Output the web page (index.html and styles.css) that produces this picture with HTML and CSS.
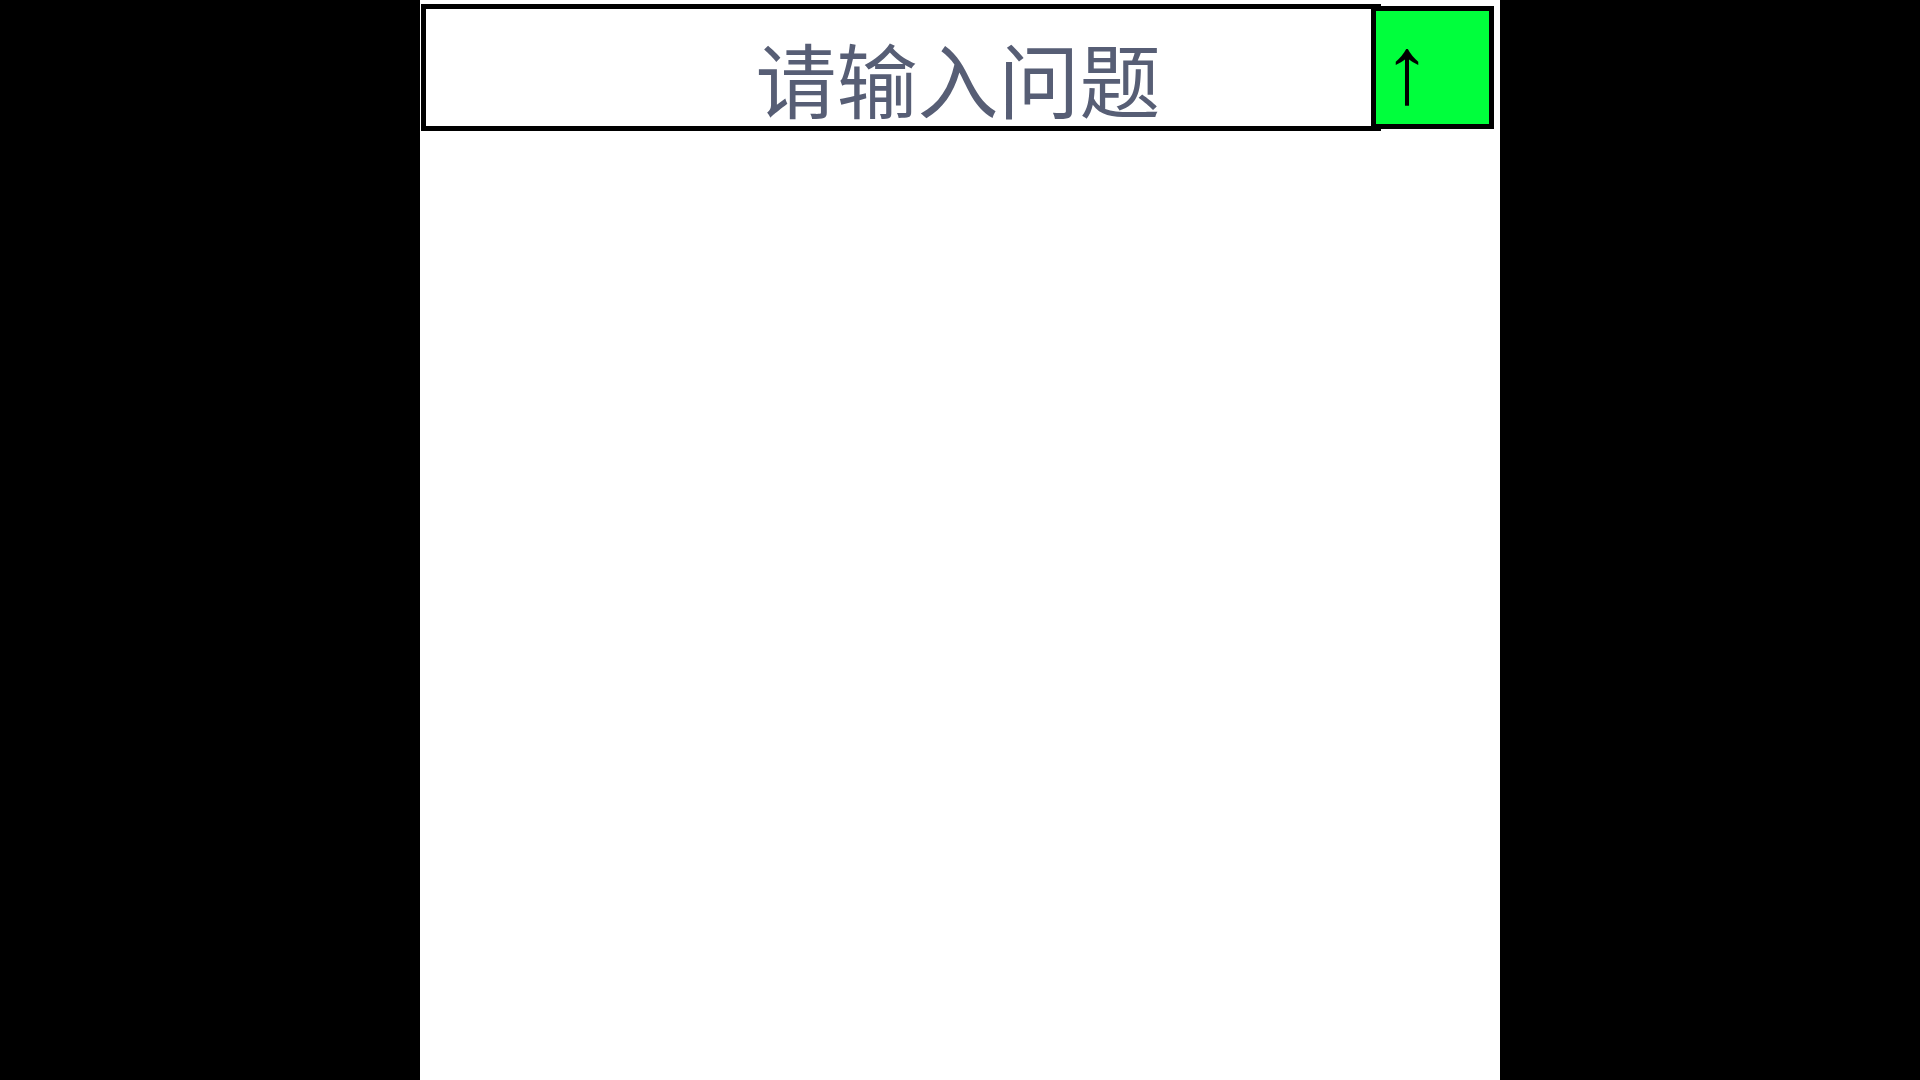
FILE: index.html
```
<!DOCTYPE html>
<html lang="zh-CN">
<head>
    <meta charset="UTF-8">
    <meta name="viewport" content="width=device-width, initial-scale=1.0">
    <title>请输入问题</title>

    <link rel="stylesheet" href="styles.css">

</head>
<body>

    <main class="stage">
        <form class="ask">
            <input type="text" class="ask-input" placeholder="请输入问题" aria-label="请输入问题">
            <button type="button" class="ask-send">↑</button>
        </form>
    </main>

</body>
</html>
```
FILE: styles.css
```
*{
    margin: 0;padding: 0;
    box-sizing: border-box;
}

body{
    background: black;
}

/* square stage in the middle of the window */
.stage{
    width: 100vh;
    max-width: 100%;
    min-height: 100vh;
    margin: 0 auto;
    background: white;
}

.ask{
    display: flex;
    align-items: center;
    padding: 4px 6px 0 1px;
}

.ask-input{
    flex: 1;
    min-width: 0;
    height: 127px;
    padding: 34px 0 0 114px;
    border: 5px solid black;
    border-radius: 0;
    outline: none;
    background: white;
    color: #575e75;
    font-family: "Liberation Sans", "Noto Sans CJK SC", sans-serif;
    font-size: 81px;
    line-height: 83px;
    text-align: center;
}

.ask-input::placeholder{
    color: #575e75;
    opacity: 1;
}

/* the button overlaps the end of the input */
.ask-send{
    flex: none;
    width: 123px;
    height: 123px;
    margin-left: -10px;
    padding: 4px 0 0 7px;
    border: 5px solid black;
    background: #00ff3c;
    color: black;
    font-family: "Liberation Sans", sans-serif;
    font-size: 96px;
    font-weight: bold;
    line-height: 92px;
    text-align: left;
}
```
